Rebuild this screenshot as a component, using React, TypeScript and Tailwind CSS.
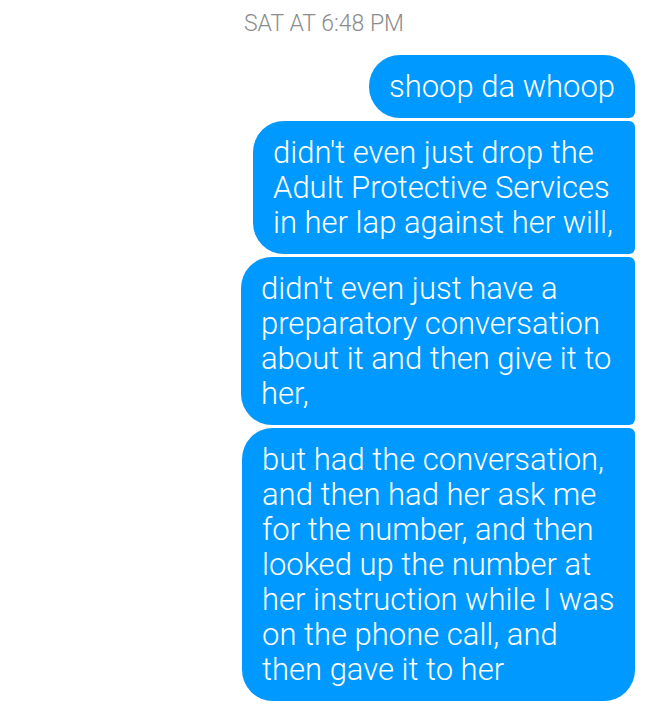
type Message = { id: number; width: string; corners: string; text: string };

const messages: Message[] = [
  { id: 1, width: "max-w-[266px]", corners: "rounded-l-[31px] rounded-tr-[31px] rounded-br-[6px]", text: "shoop da whoop" },
  { id: 2, width: "max-w-[382px]", corners: "rounded-l-[31px] rounded-r-[6px]", text: "didn't even just drop the Adult Protective Services in her lap against her will," },
  { id: 3, width: "max-w-[394px]", corners: "rounded-l-[31px] rounded-r-[6px]", text: "didn't even just have a preparatory conversation about it and then give it to her," },
  { id: 4, width: "max-w-[393px]", corners: "rounded-l-[31px] rounded-tr-[6px] rounded-br-[31px]", text: "but had the conversation, and then had her ask me for the number, and then looked up the number at her instruction while I was on the phone call, and then gave it to her" },
];

export default function App() {
  return (
    <main className="min-h-screen bg-white pt-2 font-['Roboto',sans-serif]">
      <time className="block text-center text-[23px] font-light leading-8 text-[#8c8c8c]">SAT AT 6:48 PM</time>
      <ol className="mt-[15px] flex flex-col items-end gap-[3px] pr-[13px]">
        {messages.map((m) => (
          <li key={m.id} className={`w-full bg-[#0099ff] py-[14px] pl-5 pr-[15px] text-[31px] font-light leading-[35px] text-white ${m.width} ${m.corners}`}>
            {m.text}
          </li>
        ))}
      </ol>
    </main>
  );
}
